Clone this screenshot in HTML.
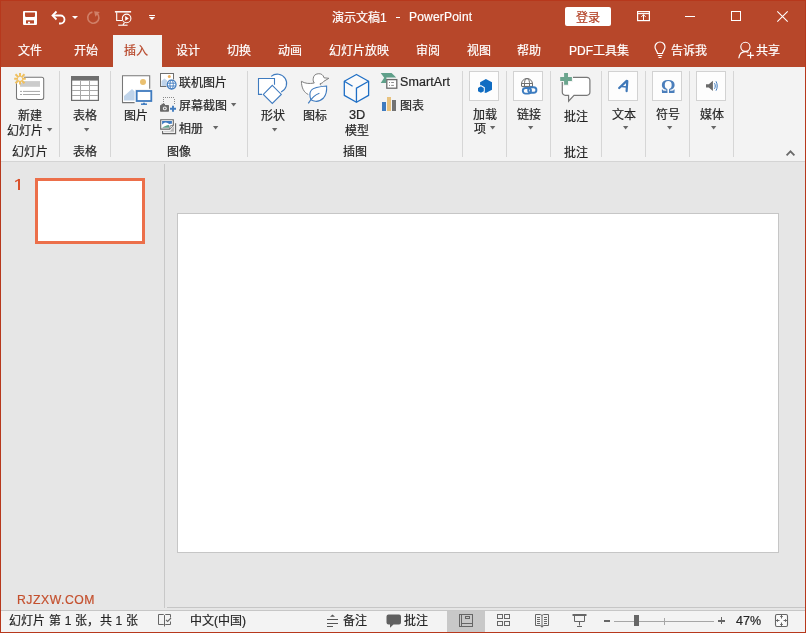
<!DOCTYPE html>
<html lang="zh-CN"><head><meta charset="utf-8">
<style>
*{margin:0;padding:0;box-sizing:border-box}
html,body{width:806px;height:633px;overflow:hidden;background:#E6E6E6;font-family:"Liberation Sans",sans-serif;position:relative}
.a{position:absolute}
.t{position:absolute;white-space:nowrap;line-height:12px;font-size:12px;will-change:transform;-webkit-text-stroke:0.2px currentColor}
.w{color:#fff}
.k{color:#262626}
svg{position:absolute;overflow:visible}
#title{left:0;top:0;width:806px;height:67px;background:#B7472A}
#ribbon{left:0;top:67px;width:806px;height:94px;background:#F3F3F3}
#rline{left:0;top:161px;width:806px;height:1px;background:#D4D4D4}
.sep{position:absolute;width:1px;top:71px;height:86px;background:#D6D6D6}
#split{left:164px;top:164px;width:1px;height:444px;background:#C8C8C8}
#slide{left:177px;top:213px;width:602px;height:340px;background:#fff;border:1px solid #C6C6C6}
#thumb{left:35px;top:178px;width:110px;height:66px;background:#fff;border:3px solid #EC6F4A}
#status{left:0;top:611px;width:806px;height:22px;background:#F3F3F3}
#sline{left:0;top:610px;width:806px;height:1px;background:#C6C6C6}
#nline{left:167px;top:607px;width:639px;height:1px;background:#C6C6C6}
.bd{position:absolute;background:#B7381C}
.box{position:absolute;top:71px;width:30px;height:30px;background:#FDFDFD;border:1px solid #D2D2D2}
.arr{position:absolute;width:0;height:0;border-left:2.6px solid transparent;border-right:2.6px solid transparent;border-top:3.4px solid #666}
</style></head>
<body>
<div id="title" class="a"></div>
<div id="ribbon" class="a"></div>
<div id="rline" class="a"></div>
<div id="split" class="a"></div>
<div id="slide" class="a"></div>
<div id="thumb" class="a"></div>
<div id="nline" class="a"></div>
<div id="sline" class="a"></div>
<div id="status" class="a"></div>

<!-- ===== title bar ===== -->
<!-- save -->
<svg style="left:23px;top:11px" width="14" height="14" viewBox="0 0 14 14"><path d="M1 0h12a1 1 0 0 1 1 1v12a1 1 0 0 1-1 1H1a1 1 0 0 1-1-1V1a1 1 0 0 1 1-1z" fill="#fff"/><path d="M2 1.5h10v3.8l-0.8 0.8H2.8L2 5.3z" fill="#B7472A"/><path d="M3 9.3h8v3.2H3z" fill="#B7472A"/><rect x="5" y="10.8" width="2" height="1.8" fill="#fff"/></svg>
<!-- undo -->
<svg style="left:51px;top:10px" width="16" height="15" viewBox="0 0 16 15"><path d="M2 5.5h7.5a4 4 0 0 1 0 8H8" fill="none" stroke="#fff" stroke-width="1.8"/><path d="M5.5 1.5L1.5 5.5 5.5 9.5" fill="none" stroke="#fff" stroke-width="1.8"/></svg>
<div class="a" style="left:72px;top:16px;width:0;height:0;border-left:3px solid transparent;border-right:3px solid transparent;border-top:3px solid #fff"></div>
<!-- redo disabled -->
<svg style="left:84px;top:8px" width="20" height="20" viewBox="0 0 20 20"><path d="M8.4 4.1A5.6 5.6 0 1 0 13.2 5.6" fill="none" stroke="#D08068" stroke-width="1.6"/><path d="M10.1 3.3L15.8 3.9 11.3 8.7z" fill="#D08068"/></svg>
<!-- slideshow from start -->
<svg style="left:114px;top:10px" width="18" height="17" viewBox="0 0 18 17"><path d="M0.9 1.8h16.2" stroke="#fff" stroke-width="1.5"/><path d="M2.7 2.2v8.3h5.5" fill="none" stroke="#fff" stroke-width="1.1"/><circle cx="12.6" cy="8.4" r="4.3" fill="none" stroke="#fff" stroke-width="1.1"/><path d="M11.2 6.1v4.6l3.6-2.3z" fill="#fff"/><path d="M4.2 15.2h9.4" stroke="#fff" stroke-width="1.1"/><path d="M10.4 12.6L9 15" stroke="#fff" stroke-width="1.1"/></svg>
<!-- customize qat -->
<div class="a" style="left:148.5px;top:15px;width:6px;height:1.4px;background:#fff"></div>
<div class="a" style="left:148.5px;top:17.2px;width:0;height:0;border-left:3px solid transparent;border-right:3px solid transparent;border-top:3.8px solid #fff"></div>

<div class="t w" style="left:332px;top:11.5px;font-size:12px;line-height:13px">演示文稿1</div>
<div class="a" style="left:396px;top:17px;width:4px;height:1px;background:#fff"></div>
<div class="t w" style="left:409px;top:11px;font-size:12px;line-height:13px;letter-spacing:0.2px">PowerPoint</div>

<div class="a" style="left:565px;top:7px;width:46px;height:19px;background:#fff;border-radius:2px"></div>
<div class="t" style="left:576px;top:11.5px;color:#B23F22;font-size:12px;line-height:13px">登录</div>
<!-- ribbon display options -->
<svg style="left:637px;top:11px" width="13" height="10" viewBox="0 0 13 10"><rect x="0.6" y="0.6" width="11.8" height="9" fill="none" stroke="#fff" stroke-width="1.2"/><path d="M1 2.6h11" stroke="#fff" stroke-width="1.1"/><path d="M6.5 3.5V10M4.3 5.9l2.2-2.2 2.2 2.2" fill="none" stroke="#fff" stroke-width="1"/></svg>
<div class="a" style="left:685px;top:16px;width:10px;height:1px;background:#fff"></div>
<div class="a" style="left:731px;top:11px;width:10px;height:10px;border:1px solid #fff"></div>
<svg style="left:777px;top:11px" width="11" height="11" viewBox="0 0 11 11"><path d="M0.3 0.3l10.4 10.4M10.7 0.3L0.3 10.7" stroke="#fff" stroke-width="1.1"/></svg>

<!-- ===== tabs ===== -->
<div class="a" style="left:113px;top:35px;width:49px;height:32px;background:#F3F3F3"></div>
<div class="t w" style="left:18px;top:44.5px">文件</div>
<div class="t w" style="left:74px;top:44.5px">开始</div>
<div class="t" style="left:124px;top:44.5px;color:#B7472A">插入</div>
<div class="t w" style="left:176px;top:44.5px">设计</div>
<div class="t w" style="left:227px;top:44.5px">切换</div>
<div class="t w" style="left:278px;top:44.5px">动画</div>
<div class="t w" style="left:329px;top:44.5px">幻灯片放映</div>
<div class="t w" style="left:416px;top:44.5px">审阅</div>
<div class="t w" style="left:467px;top:44.5px">视图</div>
<div class="t w" style="left:517px;top:44.5px">帮助</div>
<div class="t w" style="left:569px;top:44.5px">PDF工具集</div>
<svg style="left:654px;top:42px" width="12" height="17" viewBox="0 0 12 17"><path d="M3.5 11.5C3.5 9 1 8 1 5a5 5 0 0 1 10 0c0 3-2.5 4-2.5 6.5z" fill="none" stroke="#fff" stroke-width="1.2"/><path d="M3.8 13.5h4.4M4.5 15.5h3" stroke="#fff" stroke-width="1.2"/></svg>
<div class="t w" style="left:671px;top:44.5px">告诉我</div>
<svg style="left:738px;top:41px" width="17" height="18" viewBox="0 0 17 18"><circle cx="7.4" cy="5.8" r="4.6" fill="none" stroke="#fff" stroke-width="1.15"/><path d="M0.8 17.2C1.3 13 3.8 10.6 7.4 10.6c1.2 0 2.2 0.25 3.1 0.7" fill="none" stroke="#fff" stroke-width="1.15"/><path d="M12.6 11v6.6M9.3 14.3h6.6" stroke="#fff" stroke-width="1.15"/></svg>
<div class="t w" style="left:756px;top:44.5px">共享</div>

<!-- ===== ribbon content ===== -->
<div class="sep" style="left:59px"></div>
<div class="sep" style="left:110px"></div>
<div class="sep" style="left:247px"></div>
<div class="sep" style="left:462px"></div>
<div class="sep" style="left:506px"></div>
<div class="sep" style="left:550px"></div>
<div class="sep" style="left:601px"></div>
<div class="sep" style="left:645px"></div>
<div class="sep" style="left:689px"></div>
<div class="sep" style="left:733px"></div>

<!-- new slide -->
<svg style="left:10px;top:68px" width="40" height="36" viewBox="0 0 40 36"><rect x="6.5" y="9.3" width="27.2" height="22.2" rx="2" fill="#fff" stroke="#767676" stroke-width="1.05"/><rect x="10" y="13.1" width="20" height="5.7" fill="#CCCCCC"/><path d="M10 23.4h2M13 23.4h17M10 26.5h2M13 26.5h17" stroke="#A6A6A6" stroke-width="1"/><circle cx="10" cy="10.8" r="4.2" fill="#F3F3F3"/><path d="M10 5v3.8M10 12.8v3.8M4.2 10.8h3.8M12 10.8h3.8M5.5 6.3l3.1 3.1M11.4 12.2l3.1 3.1M14.5 6.3l-3.1 3.1M8.6 12.2l-3.1 3.1" stroke="#EFC060" stroke-width="2"/></svg>
<div class="t k" style="left:18px;top:109.5px">新建</div>
<div class="t k" style="left:7px;top:124.5px">幻灯片</div>
<svg style="left:46.8px;top:128px" width="6" height="4" viewBox="0 0 6 4"><path d="M0 0h5.3L2.65 3.4z" fill="#666"/></svg>
<div class="t k" style="left:12px;top:145.5px">幻灯片</div>

<!-- table -->
<svg style="left:71px;top:76px" width="28" height="25" viewBox="0 0 28 25"><rect x="0.6" y="0.6" width="26.8" height="23.8" fill="#fff" stroke="#6E6E6E" stroke-width="1.2"/><path d="M1 9.5h26M1 14.5h26M1 19.5h26M9.5 5v19M18.5 5v19" stroke="#A8A8A8" stroke-width="1"/><rect x="0" y="0" width="28" height="4.6" fill="#6E6E6E"/></svg>
<div class="t k" style="left:73px;top:109.5px">表格</div>
<svg style="left:83.8px;top:128px" width="6" height="4" viewBox="0 0 6 4"><path d="M0 0h5.3L2.65 3.4z" fill="#666"/></svg>
<div class="t k" style="left:73px;top:145.5px">表格</div>

<!-- picture -->
<svg style="left:116px;top:70px" width="40" height="38" viewBox="0 0 40 38"><rect x="6.5" y="5.8" width="27.2" height="26.8" fill="#fff"/><path d="M18.6 32.6H6.5V5.8h27.2v13" fill="none" stroke="#777" stroke-width="1.05"/><circle cx="27" cy="11.9" r="3" fill="#EAC070"/><path d="M8 30.6v-4.6l8-7 2.6 2.6v9z" fill="#C0D4EA"/><rect x="19" y="19.2" width="17.5" height="13.5" fill="#F3F3F3"/><rect x="20.7" y="21" width="14.6" height="10" fill="#fff" stroke="#3F7BBF" stroke-width="1.8"/><path d="M25 34.2h6" stroke="#3F7BBF" stroke-width="1.5"/><path d="M27 33.6h2" stroke="#3F7BBF" stroke-width="1.5"/></svg>
<div class="t k" style="left:124px;top:109.5px">图片</div>

<!-- online pictures -->
<svg style="left:156px;top:70px" width="24" height="20" viewBox="0 0 24 20"><rect x="4.5" y="3.5" width="13" height="13" fill="#fff" stroke="#6F6F6F" stroke-width="1"/><circle cx="13.3" cy="6.5" r="1.5" fill="#EAB060"/><path d="M5.5 16V11l3-2.5 2.5 2V16z" fill="#C0D4EA"/><circle cx="15.6" cy="14.6" r="5.6" fill="#F3F3F3"/><circle cx="15.6" cy="14.6" r="4.4" fill="#fff" stroke="#3F7BBF" stroke-width="1.3"/><path d="M12 13.2h7.2M12 16h7.2" stroke="#3F7BBF" stroke-width="0.9"/><ellipse cx="15.6" cy="14.6" rx="1.7" ry="4.2" fill="none" stroke="#3F7BBF" stroke-width="0.9"/></svg>
<div class="t k" style="left:179px;top:76.5px">联机图片</div>
<!-- screenshot -->
<svg style="left:156px;top:95px" width="24" height="20" viewBox="0 0 24 20"><g fill="#8A8A8A"><rect x="7" y="2" width="1" height="1"/><rect x="9" y="2" width="1" height="1"/><rect x="11" y="2" width="1" height="1"/><rect x="13" y="2" width="1" height="1"/><rect x="15" y="2" width="1" height="1"/><rect x="17" y="2" width="1" height="1"/><rect x="7" y="4" width="1" height="1"/><rect x="18" y="4" width="1" height="1"/><rect x="7" y="6" width="1" height="1"/><rect x="18" y="6" width="1" height="1"/><rect x="7" y="8" width="1" height="1"/><rect x="18" y="8" width="1" height="1"/></g><rect x="4" y="10" width="9" height="6.8" rx="0.8" fill="#6A6A6A"/><rect x="5.5" y="8.8" width="3.5" height="2" fill="#6A6A6A"/><circle cx="8.8" cy="13.4" r="1.9" fill="#F3F3F3"/><circle cx="8.8" cy="13.4" r="0.9" fill="#6A6A6A"/><path d="M17 10.8v6M14 13.8h6" stroke="#3F7BBF" stroke-width="1.9"/></svg>
<div class="t k" style="left:179px;top:99.5px">屏幕截图</div>
<svg style="left:230.6px;top:102.6px" width="6" height="4" viewBox="0 0 6 4"><path d="M0 0h5.3L2.65 3.4z" fill="#666"/></svg>
<!-- photo album -->
<svg style="left:158px;top:116px" width="22" height="20" viewBox="0 0 22 20"><path d="M4.6 15V17.6H17.6V7.3" fill="none" stroke="#666" stroke-width="1.1"/><path d="M11.8 15.7L15.9 10.2V15.7z" fill="#B4B4B4"/><path d="M6.2 15.6H15" stroke="#C8C8C8" stroke-width="0.9"/><path d="M2.7 3.7H15.3V9.3L11.5 13.1H2.7z" fill="#fff" stroke="#666" stroke-width="1.1"/><path d="M11.5 13.1L12.1 9.9 15.3 9.3" fill="#fff" stroke="#777" stroke-width="0.9"/><path d="M4.1 4.9H13.9V7.8C13 7.5 12 8.3 11 7.8 10 7.3 9 6.3 7.5 6.5 6 6.7 5 7.8 4.1 8.5z" fill="#3F7BBF"/><path d="M4.1 11.7C6.1 10.2 8.6 9.2 11.2 8.9V11.7z" fill="#5FA08A"/></svg>
<div class="t k" style="left:179px;top:122.5px">相册</div>
<svg style="left:212.7px;top:125.8px" width="6" height="4" viewBox="0 0 6 4"><path d="M0 0h5.3L2.65 3.4z" fill="#666"/></svg>
<div class="t k" style="left:167px;top:145.5px">图像</div>

<!-- shapes -->
<svg style="left:252px;top:68px" width="40" height="40" viewBox="0 0 40 40"><rect x="6.5" y="10.5" width="16" height="16" fill="#fff"/><circle cx="25.5" cy="15.4" r="9.3" fill="#fff"/><path d="M10 26.4H6.5V10.5h16v6.3" fill="none" stroke="#3F7BBF" stroke-width="1.1"/><path d="M19.2 8.4A9.3 9.3 0 1 1 29.1 23.9" fill="none" stroke="#3F7BBF" stroke-width="1.1"/><path d="M20.3 17.4l9 9-9 9-9-9z" fill="#fff" stroke="#3F7BBF" stroke-width="1.1"/></svg>
<div class="t k" style="left:261px;top:109.5px">形状</div>
<svg style="left:271.5px;top:128px" width="6" height="4" viewBox="0 0 6 4"><path d="M0 0h5.3L2.65 3.4z" fill="#666"/></svg>

<!-- icons (duck+leaf) -->
<svg style="left:296px;top:68px" width="40" height="40" viewBox="0 0 40 40"><path d="M12.3 26.5C8 24.5 5.5 20 5.4 13.3 9 15.5 13 16 18.3 15 17.2 13.8 17 12 17.2 10.8A5.5 5.5 0 0 1 28 9.8L32.9 10.3 27.8 13.3C27 14.8 25.5 15.3 24 15.8 24.2 16.6 24.6 17.3 25.3 17.7" fill="#fff" stroke="#808080" stroke-width="1"/><path d="M15 31.8C13.5 28 13.8 24 15.5 22 18 19 24 18.5 30.6 18 31 23 30 27 27.5 30 25 32.5 22 33.5 19.5 33.3 17.8 33.2 16.2 32.6 15 31.8z" fill="#fff" stroke="#3F7BBF" stroke-width="1.1"/><path d="M12.3 35.4C15 31 18 27 23.4 25.3" fill="none" stroke="#3F7BBF" stroke-width="1.2"/></svg>
<div class="t k" style="left:303px;top:109.5px">图标</div>

<!-- 3D model -->
<svg style="left:338px;top:68px" width="40" height="40" viewBox="0 0 40 40"><path d="M18.45 6.5L30.6 13.2V27.4L18.45 34.3 6.3 27.4V13.2z" fill="#FAFAFA" stroke="#1F6FC5" stroke-width="1.3" stroke-linejoin="round"/><path d="M30.6 13.2L18.45 20.2V34.3M6.3 13.2L14.6 18.3" fill="none" stroke="#1F6FC5" stroke-width="1.3"/></svg>
<div class="t k" style="left:349px;top:109px;font-size:12.8px">3D</div>
<div class="t k" style="left:345px;top:124.5px">模型</div>
<div class="t k" style="left:343px;top:145.5px">插图</div>

<!-- SmartArt -->
<svg style="left:376px;top:68px" width="26" height="24" viewBox="0 0 26 24"><path d="M4.7 4.9H15.6L20.2 9.6H10.4V14.9H4.7L8.2 9.8z" fill="#5FA08A"/><rect x="10.8" y="11.6" width="10" height="8.6" fill="#fff" stroke="#6A6A6A" stroke-width="1.3"/><path d="M13 14.5h1M13 17.4h1M15.2 14.5h2.7M15.2 17.4h2.7" stroke="#8C8C8C" stroke-width="1"/></svg>
<div class="t k" style="left:400px;top:76px;font-size:12.5px;letter-spacing:0.1px">SmartArt</div>
<!-- chart -->
<svg style="left:381px;top:96px" width="16" height="15" viewBox="0 0 16 15"><rect x="1" y="6" width="4" height="9" fill="#3F7BBF"/><rect x="6" y="1" width="4" height="14" fill="#E8C27E"/><rect x="11" y="4" width="4" height="11" fill="#737373"/></svg>
<div class="t k" style="left:400px;top:99.5px">图表</div>

<!-- add-ins -->
<div class="box" style="left:469px"></div>
<svg style="left:466px;top:68px" width="36" height="36" viewBox="0 0 36 36"><path d="M19.9 11L26 14.2V21.7L19.8 24.9 14.1 22V14.2z" fill="#0F6CC2"/><path d="M14.9 17l3.9 2.2v4.6l-3.9 2.2-3.9-2.2v-4.6z" fill="#FDFDFD"/><path d="M14.9 18.3l2.9 1.6v3.3l-2.9 1.6-2.9-1.6v-3.3z" fill="#0F6CC2"/></svg>
<div class="t k" style="left:473px;top:108.5px">加载</div>
<div class="t k" style="left:474px;top:122.5px">项</div>
<svg style="left:489.8px;top:126px" width="6" height="4" viewBox="0 0 6 4"><path d="M0 0h5.3L2.65 3.4z" fill="#666"/></svg>

<!-- link -->
<div class="box" style="left:513px"></div>
<svg style="left:520px;top:77px" width="18" height="18" viewBox="0 0 18 18"><path d="M1.5 9.5V7a5.5 5.5 0 0 1 11 0v2.5" fill="none" stroke="#6F6F6F" stroke-width="1"/><path d="M1.5 6.5h11M4.5 9.5V5.5a2.5 4 0 0 1 5 0v4" fill="none" stroke="#6F6F6F" stroke-width="1"/><path d="M2 9.5h11" stroke="#6F6F6F" stroke-width="1.2"/><rect x="2.8" y="11" width="8.2" height="5.6" rx="2.8" fill="none" stroke="#3C7CC0" stroke-width="1.9"/><rect x="8.2" y="10.2" width="8.2" height="5.6" rx="2.8" fill="none" stroke="#3C7CC0" stroke-width="1.9"/></svg>
<div class="t k" style="left:517px;top:108.5px">链接</div>
<svg style="left:527.8px;top:126px" width="6" height="4" viewBox="0 0 6 4"><path d="M0 0h5.3L2.65 3.4z" fill="#666"/></svg>

<!-- comment -->
<svg style="left:556px;top:68px" width="40" height="38" viewBox="0 0 40 38"><path d="M9.3 9.3H30.9a3 3 0 0 1 3 3V24.3a3 3 0 0 1-3 3H18L12.6 33.2V27.3H9.3a3 3 0 0 1-3-3V12.3a3 3 0 0 1 3-3z" fill="#fff" stroke="#777" stroke-width="1.2"/><path d="M8.1 5.1h3.9v3.9h3.9v3.9h-3.9v3.9H8.1v-3.9H4.2V9h3.9z" fill="#6BA58E" stroke="#F3F3F3" stroke-width="2.2" paint-order="stroke"/></svg>
<div class="t k" style="left:564px;top:110.5px">批注</div>
<div class="t k" style="left:564px;top:146.5px">批注</div>

<!-- text -->
<div class="box" style="left:608px"></div>
<svg style="left:612px;top:76px" width="24" height="20" viewBox="0 0 24 20"><path d="M7.2 12L14.7 4.9" fill="none" stroke="#3F78B8" stroke-width="2.3" stroke-linecap="round"/><path d="M15.3 5.1L14.6 15.2" fill="none" stroke="#3F78B8" stroke-width="2.2" stroke-linecap="round"/><path d="M9.6 10.5L14.9 10.9" stroke="#3F78B8" stroke-width="1.5"/></svg>
<div class="t k" style="left:612px;top:108.5px">文本</div>
<svg style="left:622.8px;top:126px" width="6" height="4" viewBox="0 0 6 4"><path d="M0 0h5.3L2.65 3.4z" fill="#666"/></svg>

<!-- symbol -->
<div class="box" style="left:652px"></div>
<div class="t" style="left:660.5px;top:79px;font-size:18px;line-height:16px;color:#4A7EBB;font-weight:bold;-webkit-text-stroke:0;letter-spacing:0;font-family:'Liberation Serif',serif">&#937;</div>
<div class="t k" style="left:656px;top:108.5px">符号</div>
<svg style="left:666.8px;top:126px" width="6" height="4" viewBox="0 0 6 4"><path d="M0 0h5.3L2.65 3.4z" fill="#666"/></svg>

<!-- media -->
<div class="box" style="left:696px"></div>
<svg style="left:706px;top:80px" width="14" height="12" viewBox="0 0 14 12"><path d="M0 4.2h2.8L6.9 0.8v10.2L2.8 7.6H0z" fill="#6A6A6A"/><path d="M8.5 3.2c1 1.7 1 3.9 0 5.6M10 1.3c1.6 2.7 1.6 6.7 0 9.4" fill="none" stroke="#3F7BBF" stroke-width="1"/></svg>
<div class="t k" style="left:700px;top:108.5px">媒体</div>
<svg style="left:710.8px;top:126px" width="6" height="4" viewBox="0 0 6 4"><path d="M0 0h5.3L2.65 3.4z" fill="#666"/></svg>

<!-- collapse -->
<svg style="left:785px;top:149px" width="11" height="8" viewBox="0 0 11 8"><path d="M1.6 6.3L5.5 2.3 9.4 6.3" fill="none" stroke="#6A6A6A" stroke-width="1.8"/></svg>

<!-- ===== left pane ===== -->
<svg style="left:14px;top:178px" width="8" height="13" viewBox="0 0 8 13"><path d="M5 1v11" stroke="#D9512C" stroke-width="2"/><path d="M1.2 3.6L5.3 1.2" stroke="#D9512C" stroke-width="1.3"/></svg>
<div class="t" style="left:17px;top:594px;font-size:12.2px;line-height:13px;color:#C4502E;letter-spacing:0.55px">RJZXW.COM</div>

<!-- ===== status bar ===== -->
<div class="t k" style="left:8.5px;top:614.5px;letter-spacing:0.2px">幻灯片 第 1 张，共 1 张</div>
<svg style="left:157px;top:613px" width="16" height="16" viewBox="0 0 16 16"><path d="M13.5 4.5V1.5H8.5L7.5 2.5 6.5 1.5H1.5V11.5H6.5L7.5 12.5 8.5 11.5H13.5V8.5" fill="none" stroke="#666" stroke-width="1"/><path d="M7.5 2.5V13.5" stroke="#666" stroke-width="1"/><path d="M9 6.8l1.6 1.6 3.4-3.4" fill="none" stroke="#666" stroke-width="1.1"/></svg>
<div class="t k" style="left:190px;top:614.5px">中文(中国)</div>
<svg style="left:326px;top:613px" width="13" height="15" viewBox="0 0 13 15"><path d="M4 3.8l2.5-2.2 2.5 2.2z" fill="#555"/><path d="M1 6.5h11M1 10.5h11M1 13.5h6" stroke="#555" stroke-width="1"/></svg>
<div class="t k" style="left:343px;top:614.5px">备注</div>
<svg style="left:386px;top:614px" width="16" height="15" viewBox="0 0 16 15"><path d="M2.5 0.5h10.5a2 2 0 0 1 2 2v6a2 2 0 0 1-2 2H7.5l-3.5 3.2v-3.2H2.5a2 2 0 0 1-2-2v-6a2 2 0 0 1 2-2z" fill="#606060"/></svg>
<div class="t k" style="left:404px;top:614.5px">批注</div>

<div class="a" style="left:447px;top:611px;width:38px;height:21px;background:#C8C8C8"></div>
<svg style="left:458px;top:613px" width="16" height="15" viewBox="0 0 16 15"><rect x="1.5" y="1.5" width="13" height="12" fill="none" stroke="#666" stroke-width="1"/><path d="M3.5 1.5v12M3.5 10.5h11" stroke="#666" stroke-width="1"/><rect x="7.5" y="3.5" width="4" height="2" fill="none" stroke="#666" stroke-width="1"/></svg>
<svg style="left:496px;top:613px" width="16" height="15" viewBox="0 0 16 15"><rect x="1.5" y="1.5" width="5" height="4" fill="none" stroke="#666" stroke-width="1"/><rect x="8.5" y="1.5" width="5" height="4" fill="none" stroke="#666" stroke-width="1"/><rect x="1.5" y="8.5" width="5" height="4" fill="none" stroke="#666" stroke-width="1"/><rect x="8.5" y="8.5" width="5" height="4" fill="none" stroke="#666" stroke-width="1"/></svg>
<svg style="left:534px;top:613px" width="16" height="16" viewBox="0 0 16 16"><path d="M1.5 1.5h5l1.5 1 1.5-1h5v11h-5l-1.5 1-1.5-1h-5z" fill="none" stroke="#666" stroke-width="1"/><path d="M8 2.5v11.5M3 4.5h3M3 6.5h3M3 8.5h3M3 10.5h3M10 4.5h3M10 6.5h3M10 8.5h3M10 10.5h3" stroke="#666" stroke-width="1"/><path d="M6.8 13l1.2 1.3 1.2-1.3" fill="none" stroke="#666" stroke-width="0.9"/></svg>
<svg style="left:572px;top:613px" width="16" height="16" viewBox="0 0 16 16"><path d="M0.5 2h14" stroke="#666" stroke-width="2"/><path d="M2.5 2.5v6h10v-6" fill="none" stroke="#666" stroke-width="1"/><path d="M7.5 8.5v4M5 13.5h5" stroke="#666" stroke-width="1"/></svg>
<div class="a" style="left:604px;top:620px;width:6px;height:2px;background:#666"></div>
<div class="a" style="left:614px;top:621px;width:100px;height:1px;background:#A6A6A6"></div>
<div class="a" style="left:664px;top:618px;width:1px;height:7px;background:#A6A6A6"></div>
<div class="a" style="left:634px;top:615px;width:5px;height:11px;background:#666"></div>
<div class="a" style="left:718px;top:620px;width:7px;height:1.6px;background:#666"></div>
<div class="a" style="left:720.7px;top:617.3px;width:1.6px;height:7px;background:#666"></div>
<div class="t k" style="left:736px;top:615px;font-size:12.5px;line-height:13px;letter-spacing:0.1px">47%</div>
<svg style="left:772px;top:611px" width="20" height="20" viewBox="0 0 20 20"><rect x="3.5" y="3.5" width="12" height="12" rx="1.4" fill="#FAFAFA" stroke="#666" stroke-width="1.1"/><path d="M9.5 4v3.5M9.5 11.5V15M4 9.5h3.5M11.5 9.5H15M8.2 5.5h2.6M8.2 13.5h2.6M5.5 8.2v2.6M13.5 8.2v2.6" fill="none" stroke="#666" stroke-width="1"/></svg>

<!-- window border -->
<div class="bd" style="left:0;top:0;width:1px;height:633px"></div>
<div class="bd" style="left:805px;top:0;width:1px;height:633px"></div>
<div class="bd" style="left:0;top:632px;width:806px;height:1px"></div>
<div class="bd" style="left:0;top:0;width:806px;height:1px"></div>
</body></html>
